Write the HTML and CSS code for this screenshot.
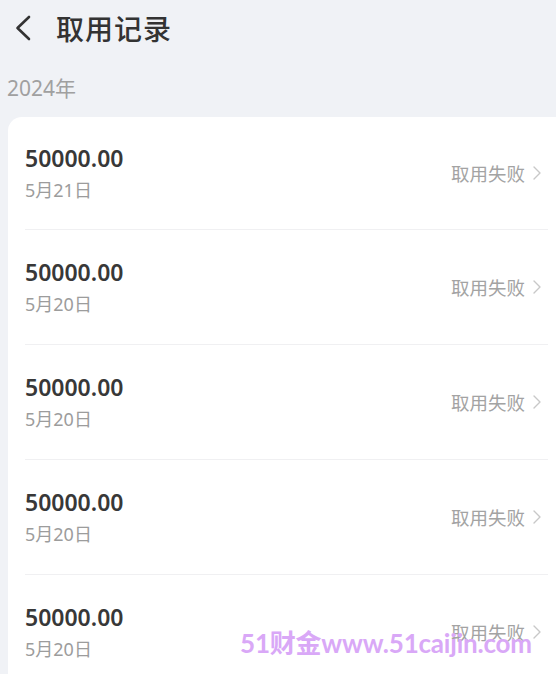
FILE: index.html
```html
<!DOCTYPE html>
<html lang="zh-CN">
<head>
<meta charset="utf-8">
<link rel="stylesheet" href="styles.css">
</head>
<body>
<div class="page">
  <header class="topbar">
    <svg class="back" width="20" height="28" viewBox="0 0 20 28"><path d="M16 3 L4.5 14 L16 25" fill="none" stroke="#333" stroke-width="2.6" stroke-linecap="round" stroke-linejoin="round"/></svg>
    <h1 class="title">取用记录</h1>
  </header>
  <div class="year">2024年</div>
  <div class="card">
    <div class="row"><div class="info"><div class="amount">50000.00</div><div class="date">5月21日</div></div><div class="status">取用失败<svg class="chev" width="10" height="16" viewBox="0 0 10 16"><path d="M2 2 L8 8 L2 14" fill="none" stroke="#c8c8c8" stroke-width="1.4" stroke-linecap="round" stroke-linejoin="round"/></svg></div></div>
    <div class="row"><div class="info"><div class="amount">50000.00</div><div class="date">5月20日</div></div><div class="status">取用失败<svg class="chev" width="10" height="16" viewBox="0 0 10 16"><path d="M2 2 L8 8 L2 14" fill="none" stroke="#c8c8c8" stroke-width="1.4" stroke-linecap="round" stroke-linejoin="round"/></svg></div></div>
    <div class="row"><div class="info"><div class="amount">50000.00</div><div class="date">5月20日</div></div><div class="status">取用失败<svg class="chev" width="10" height="16" viewBox="0 0 10 16"><path d="M2 2 L8 8 L2 14" fill="none" stroke="#c8c8c8" stroke-width="1.4" stroke-linecap="round" stroke-linejoin="round"/></svg></div></div>
    <div class="row"><div class="info"><div class="amount">50000.00</div><div class="date">5月20日</div></div><div class="status">取用失败<svg class="chev" width="10" height="16" viewBox="0 0 10 16"><path d="M2 2 L8 8 L2 14" fill="none" stroke="#c8c8c8" stroke-width="1.4" stroke-linecap="round" stroke-linejoin="round"/></svg></div></div>
    <div class="row"><div class="info"><div class="amount">50000.00</div><div class="date">5月20日</div></div><div class="status">取用失败<svg class="chev" width="10" height="16" viewBox="0 0 10 16"><path d="M2 2 L8 8 L2 14" fill="none" stroke="#c8c8c8" stroke-width="1.4" stroke-linecap="round" stroke-linejoin="round"/></svg></div></div>
  </div>
  <div class="watermark">51财金www.51caijin.com</div>
</div>
</body>
</html>
```
FILE: styles.css
```css
html, body {
  margin: 0;
  padding: 0;
  background: #f0f2f6;
  font-family: "Noto Sans", "Noto Sans CJK SC", sans-serif;
  overflow: hidden;
}
.page {
  position: relative;
  width: 556px;
  height: 674px;
  overflow: hidden;
}
.topbar {
  display: flex;
  align-items: center;
  height: 56px;
  padding-left: 13px;
}
.back {
  display: block;
  margin-top: -1px;
}
.title {
  margin: 0 0 0 23px;
  font-size: 28px;
  font-weight: 500;
  color: #333;
  letter-spacing: 1px;
}
.year {
  margin-top: 19px;
  padding-left: 7px;
  font-size: 21px;
  line-height: 26px;
  color: #a0a0a0;
  height: 26px;
}
.card {
  margin-top: 16px;
  margin-left: 8px;
  margin-right: -20px;
  background: #fff;
  border-radius: 14px;
  padding: 0 28px 0 17px;
}
.row {
  display: flex;
  align-items: center;
  justify-content: space-between;
  height: 114px;
  border-bottom: 1px solid #f0f0f2;
}
.row:first-child {
  height: 112px;
}
.info {
  display: flex;
  flex-direction: column;
  gap: 6px;
}
.amount {
  font-size: 23px;
  font-weight: 600;
  color: #383838;
  line-height: 28px;
}
.date {
  font-size: 18px;
  color: #9c9c9c;
  line-height: 24px;
}
.status {
  display: flex;
  align-items: center;
  gap: 7px;
  margin-right: 6px;
  font-size: 18.5px;
  color: #a3a3a3;
}
.chev {
  display: block;
}
.watermark {
  position: absolute;
  left: 240px;
  top: 628px;
  font-family: "Lato", "Noto Sans CJK SC", sans-serif;
  font-size: 26px;
  font-weight: 700;
  color: #d9a8f7;
  letter-spacing: -0.2px;
  line-height: 30px;
}
```
